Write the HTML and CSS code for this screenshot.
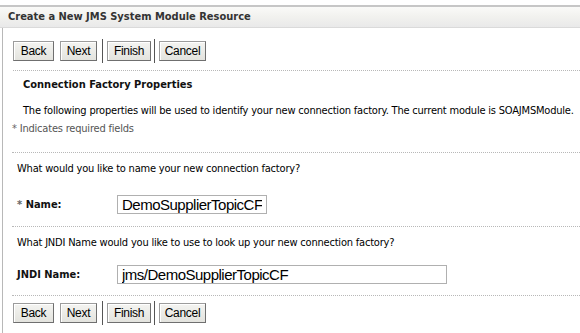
FILE: index.html
```html
<!DOCTYPE html>
<html lang="en">
<head>
    <meta charset="UTF-8">
    <title>Create a New JMS System Module Resource</title>
    <link rel="stylesheet" href="styles.css">
</head>
<body>
    <div class="panel">
        <div class="panel-title">Create a New JMS System Module Resource</div>
        <div class="panel-body">
            <div class="toolbar">
                <button class="btn back">Back</button>
                <button class="btn next">Next</button>
                <span class="sep"></span>
                <button class="btn finish">Finish</button>
                <span class="sep"></span>
                <button class="btn cancel">Cancel</button>
            </div>

            <div class="section intro">
                <h2>Connection Factory Properties</h2>
                <p>The following properties will be used to identify your new connection factory. The current module is SOAJMSModule.</p>
                <div class="required-note"><span class="star">*</span> Indicates required fields</div>
            </div>

            <div class="section">
                <p class="question">What would you like to name your new connection factory?</p>
                <div class="field">
                    <label><span class="star">*</span> Name:</label>
                    <input type="text" class="name-input" value="DemoSupplierTopicCF">
                </div>
            </div>

            <div class="section">
                <p class="question second">What JNDI Name would you like to use to look up your new connection factory?</p>
                <div class="field second">
                    <label>JNDI Name:</label>
                    <input type="text" class="jndi-input" value="jms/DemoSupplierTopicCF">
                </div>
            </div>

            <div class="toolbar bottom">
                <button class="btn back">Back</button>
                <button class="btn next">Next</button>
                <span class="sep"></span>
                <button class="btn finish">Finish</button>
                <span class="sep"></span>
                <button class="btn cancel">Cancel</button>
            </div>
        </div>
    </div>
</body>
</html>
```

FILE: styles.css
```css
body {
    margin: 0;
    background-color: #fff;
    font-family: Tahoma, "DejaVu Sans Condensed", "DejaVu Sans", sans-serif;
    font-size: 11px;
    color: #000;
}

.panel {
    padding-top: 5px;
}

.panel-title {
    border-top: 2px solid #c6c6c6;
    border-bottom: 1px solid #dadada;
    background: linear-gradient(#fafaf8, #f2f2ef 45%, #e9e9e9);
    height: 20px;
    line-height: 20px;
    padding-left: 8px;
    font-weight: bold;
    font-size: 11px;
    color: #333;
}

.panel-body {
    margin-left: 2px;
    border-left: 1px solid #b8b8b8;
    height: 310px;
}

.toolbar {
    display: flex;
    align-items: center;
    padding: 11px 0 7px 0;
    border-bottom: 1px dotted #b8b8b8;
    margin-left: 10px;
}

.toolbar.bottom {
    border-bottom: none;
    padding-top: 5px;
}

.btn {
    font-family: "Liberation Sans", Arial, sans-serif;
    font-size: 12px;
    letter-spacing: -0.3px;
    height: 20px;
    padding: 0;
    box-sizing: border-box;
    background: linear-gradient(#f4f4f1, #e3e3de);
    border: 1px solid #9c9c9c;
    border-right-color: #6f6f6f;
    border-bottom-color: #6f6f6f;
    box-shadow: inset 1px 1px 0 #fff;
    color: #000;
    margin: 0;
}

.btn.back {
    width: 41px;
}

.btn.next {
    width: 37px;
    margin-left: 6px;
    margin-right: 5px;
}

.btn.finish {
    width: 44px;
    margin-left: 4px;
    margin-right: 3px;
}

.btn.cancel {
    width: 47px;
    margin-left: 4px;
}

.sep {
    width: 1px;
    height: 24px;
    background-color: #555;
}

.section {
    border-bottom: 1px dotted #b8b8b8;
    margin-left: 9px;
}

.intro h2 {
    font-size: 11px;
    font-weight: bold;
    margin: 0;
    padding: 7px 0 0 11px;
    color: #111;
}

.intro p {
    margin: 13px 0 0 11px;
    white-space: nowrap;
    letter-spacing: -0.2px;
}

.required-note {
    color: #555;
    letter-spacing: -0.2px;
    margin: 5px 0 17px 0;
}

.star {
    color: #666;
}

.question {
    margin: 9px 0 0 5px;
    letter-spacing: -0.2px;
}

.question.second {
    margin-top: 9px;
}

.field {
    display: flex;
    align-items: center;
    padding: 20px 0 12px 5px;
}

.field.second {
    padding-top: 16px;
    padding-bottom: 11px;
}

.field label {
    width: 100px;
    font-weight: bold;
    color: #111;
}

.field input {
    font-family: "Liberation Sans", Arial, sans-serif;
    font-size: 15px;
    letter-spacing: -0.5px;
    border: 1px solid #b0b0b0;
    padding: 0 4px;
    height: 19px;
    box-sizing: border-box;
    color: #000;
    margin: 0;
}

.name-input {
    width: 150px;
}

.jndi-input {
    width: 330px;
}
```
